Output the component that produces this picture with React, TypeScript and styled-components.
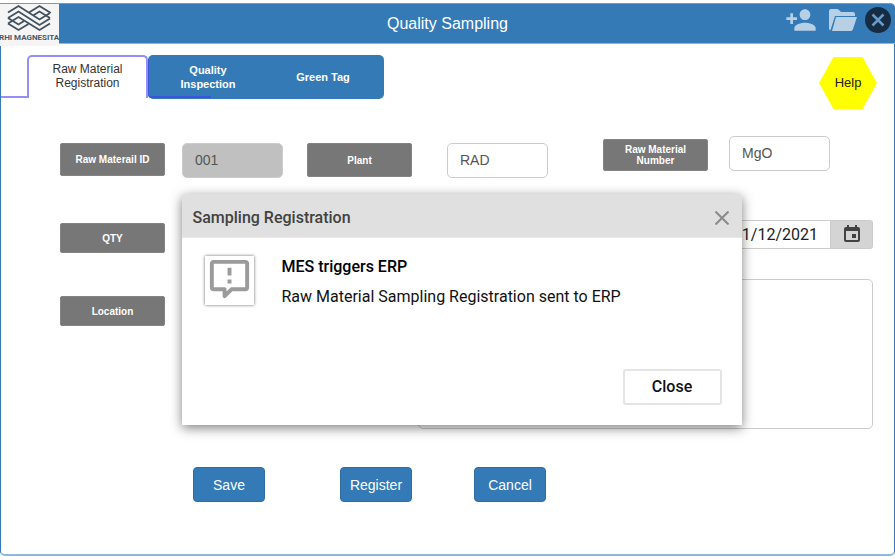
import React from "react";
import styled, { createGlobalStyle } from "styled-components";
import { MdPersonAdd } from "react-icons/md";

const blue = "#337ab7";
const sans = `"Liberation Sans", Arial, sans-serif`;
const roboto = `Roboto, "Liberation Sans", sans-serif`;

const GlobalStyle = createGlobalStyle`
  *, *::before, *::after { box-sizing: border-box; }
  body { margin: 0; background: #fff; font-family: ${sans}; }
  button, input, textarea { font-family: inherit; margin: 0; }
`;

const Page = styled.div`
  padding-top: 3px;
  min-height: 100vh;
`;

const Frame = styled.main`
  position: relative;
  border: 1px solid ${blue};
  border-top: 0;
  border-bottom: 2px solid #8fb7d9;
  border-radius: 0 5px 5px 5px;
  padding-bottom: 52px;
`;

const Header = styled.header`
  display: grid;
  grid-template-columns: 1fr auto 1fr;
  align-items: center;
  height: 41px;
  margin: 0 -1px;
  background: ${blue};
  border-top: 1px solid #6d9fcb;
  border-bottom: 1px solid #8fb7d9;
  border-radius: 0 5px 0 0;
`;

const Logo = styled.div`
  align-self: start;
  width: 59px;
  height: 42px;
  background: #f5f5f5;
  overflow: hidden;
  z-index: 1;

  svg { display: block; }
`;

const LogoText = styled.div`
  margin-left: -1px;
  color: #4a5864;
  font: bold 8px/9px Roboto, sans-serif;
  white-space: nowrap;
`;

const Title = styled.h1`
  margin: 0;
  padding-bottom: 2px;
  color: #fff;
  font: 400 16px/20px ${sans};
`;

const HeaderActions = styled.div`
  display: flex;
  justify-content: flex-end;
  align-items: center;
  align-self: start;
  height: 31px;
  padding-right: 4px;
`;

const IconButton = styled.button`
  display: flex;
  padding: 0;
  border: 0;
  background: none;
  color: #b8d0e5;

  & + & { margin-left: 12px; }
  & + &:last-child { margin-left: 8px; }
  svg { display: block; }
`;

const TopRow = styled.div`
  display: flex;
  justify-content: space-between;
  padding: 11px 17px 0 0;
`;

const Tabs = styled.div`
  display: flex;
  align-items: flex-start;

  &::before {
    content: "";
    width: 26px;
    height: 43px;
    border-bottom: 2px solid #9290f8;
  }
`;

const Tab = styled.button<{ $active?: boolean }>`
  position: relative;
  width: ${(p) => (p.$active ? 121 : 120)}px;
  height: 44px;
  padding: 0;
  border: 0;
  background: ${(p) => (p.$active ? "#fff" : blue)};
  color: ${(p) => (p.$active ? "#333" : "#fff")};
  font: ${(p) => (p.$active ? "400 12px" : "700 11px")}/14px ${sans};

  &:first-child {
    height: 43px;
    padding-bottom: 3px;
    border: 2px solid #9290f8;
    border-bottom: 0;
    border-radius: 5px 5px 0 0;
  }
  &:nth-child(2) { border-radius: 5px 0 0 5px; }
  &:nth-child(2)::after {
    content: "";
    position: absolute;
    left: 0;
    top: 4px;
    bottom: 1px;
    width: 63px;
    border: solid #3a55dc;
    border-width: 0 0 2px 1px;
    border-radius: 0 0 0 4px;
  }
  &:last-child {
    width: 116px;
    padding-right: 6px;
    border-radius: 0 5px 5px 0;
  }
`;

const Help = styled.button`
  width: 58px;
  height: 52px;
  margin-top: 2px;
  padding: 0;
  border: 0;
  background: #ff0;
  clip-path: polygon(25% 0, 75% 0, 100% 50%, 75% 100%, 25% 100%, 0 50%);
  color: #222;
  font: 13px/16px ${sans};
`;

const Row = styled.div<{ $top: number }>`
  display: grid;
  grid-template-columns: 122fr 125fr 140fr 156fr 126fr 144fr;
  margin-top: ${(p) => p.$top}px;
  padding: 0 21px 0 59px;
`;

const Label = styled.label<{ $height?: number; $end?: boolean }>`
  display: flex;
  align-items: center;
  justify-content: center;
  align-self: ${(p) => (p.$end ? "end" : "start")};
  width: 105px;
  height: ${(p) => p.$height ?? 30}px;
  margin-top: ${(p) => (p.$end ? 0 : "var(--drop, 0)")};
  padding: 0 8px;
  background: #777;
  border: 1px solid #848484;
  border-radius: 2px;
  color: #fff;
  text-align: center;
  font: bold 10px/11px ${sans};
`;

const FieldRow = styled(Row)`
  --drop: 7px;
`;

const TextField = styled.input`
  width: 101px;
  height: 35px;
  margin-top: var(--drop, 0);
  padding: 0 12px 1px;
  border: 1px solid #ccc;
  border-radius: 5px;
  background: #fff;
  color: #555;
  font-size: 14px;

  &:read-only { background: #c0c0c0; }
`;

const RaisedField = styled(TextField)`
  margin-top: 0;
`;

const CompactField = styled(TextField)`
  height: 33px;
`;

const NumberLabel = styled(Label)`
  margin-top: 3px;
`;

const DateField = styled.div`
  grid-column: 5 / -1;
  justify-self: end;
  display: flex;
  height: 29px;
`;

const DateInput = styled.input`
  width: 110px;
  padding: 0 12px 0 0;
  border: 1px solid #ccc;
  border-right: 0;
  text-align: right;
  color: #212121;
  && { font: 16px/27px ${roboto}; }
`;

const DateButton = styled.button`
  display: flex;
  align-items: center;
  justify-content: center;
  width: 43px;
  padding: 0 0 2px;
  border: 1px solid #ccc;
  border-radius: 0 3px 3px 0;
  background: #d4d4d4;
`;

const Notes = styled.textarea`
  grid-column: 3 / -1;
  grid-row: 1;
  height: 150px;
  margin-left: 111px;
  border: 1px solid #ccc;
  border-radius: 5px;
  resize: none;
`;

const LocationRow = styled(Row)`
  --drop: 17px;
`;

const Actions = styled.div`
  display: grid;
  grid-template-columns: 147fr 134fr 399fr;
  margin-top: 38px;
  padding: 0 21px 0 192px;
`;

const ActionButton = styled.button`
  width: 72px;
  height: 35px;
  padding: 0;
  border: 1px solid #2e6da4;
  border-radius: 4px;
  background: ${blue};
  color: #fff;
  font-size: 14px;
`;

const Dialog = styled.section`
  position: absolute;
  top: 191px;
  left: calc(50% - 266px);
  width: 560px;
  background: #fff;
  border-radius: 3px 3px 0 0;
  box-shadow: 0 3px 12px rgba(0, 0, 0, 0.5);
  font-family: ${roboto};
`;

const DialogHeader = styled.div`
  display: flex;
  align-items: center;
  justify-content: space-between;
  height: 44px;
  padding: 4px 13px 0 11px;
  border-bottom: 1px solid #e8e8e8;
  border-radius: 3px 3px 0 0;
  background: #e0e0e0;

  button { display: flex; padding: 0; border: 0; background: none; }
`;

const DialogTitle = styled.h2`
  margin: 0;
  color: #424242;
  font: 500 16px/20px ${roboto};
`;

const DialogBody = styled.div`
  display: flex;
  gap: 28px;
  padding: 18px 22px 0 23px;
`;

const MessageIcon = styled.div`
  flex: none;
  width: 49px;
  height: 49px;
  background: #fff;
  box-shadow: 0 0 3px rgba(0, 0, 0, 0.6);
`;

const Message = styled.div`
  padding-top: 1px;
  color: #111;
  font-size: 16px;
  line-height: 20px;

  strong { display: block; margin-bottom: 10px; font-weight: 500; color: #000; }
`;

const DialogFooter = styled.div`
  display: flex;
  justify-content: flex-end;
  padding: 62px 20px 20px;
`;

const CloseButton = styled.button`
  width: 99px;
  height: 36px;
  border: 2px solid #e4e4e4;
  border-radius: 3px;
  background: #fff;
  color: #111;
  font: 500 16px/20px ${roboto};
`;

function LogoMark() {
  return (
    <svg width="59" height="29" viewBox="0 0 59 29" fill="none" stroke="#44525f" strokeWidth="1.900">
      <path d="M8 8.500l10.500-6.500 21 13.500L50 9" />
      <path d="M8 14l10.500-6.500 21 13.500L50 14.500" />
      <path d="M8 19.500L18.500 13l21 13L50 19.500" />
      <path d="M29 8.500L39.500 2 50 8.500v.5" />
      <path d="M33.500 11.300l6-3.800L50 14" />
      <path d="M8 14l10.500 6.500 5.500-3.500" />
      <path d="M8 19.500L18.500 26l10-6" />
    </svg>
  );
}

export default function App() {
  return (
    <Page>
      <GlobalStyle />
      <Frame>
        <Header>
          <Logo>
            <LogoMark />
            <LogoText>RHI MAGNESITA</LogoText>
          </Logo>
          <Title>Quality Sampling</Title>
          <HeaderActions>
            <IconButton aria-label="Add user">
              <MdPersonAdd size={32} />
            </IconButton>
            <IconButton aria-label="Open folder">
              <svg width="28" height="22" viewBox="0 0 28 22" fill="currentColor">
                <path d="M0 20V2Q0 0 2 0h6q1 0 2 1l2 2h12q2 0 2 2v2H6L1.500 21Q0 21 0 20z" />
                <path d="M7 8h21l-4 12q-.5 2-2 2H3z" />
              </svg>
            </IconButton>
            <IconButton aria-label="Close window">
              <svg width="26" height="26" viewBox="0 0 26 26">
                <circle cx="13" cy="13" r="13" fill="#152c42" />
                <path d="M7.500 7.500l11 11m0-11l-11 11" stroke="#6a9bc8" strokeWidth="2.500" />
              </svg>
            </IconButton>
          </HeaderActions>
        </Header>

        <TopRow>
          <Tabs role="tablist">
            <Tab role="tab" aria-selected="true" $active>Raw Material<br />Registration</Tab>
            <Tab role="tab" aria-selected="false">Quality<br />Inspection</Tab>
            <Tab role="tab" aria-selected="false">Green Tag</Tab>
          </Tabs>
          <Help>Help</Help>
        </TopRow>

        <FieldRow $top={27}>
          <Label htmlFor="material-id" $height={33}>Raw Materail ID</Label>
          <TextField id="material-id" value="001" readOnly />
          <Label htmlFor="plant" $height={34}>Plant</Label>
          <TextField id="plant" defaultValue="RAD" />
          <NumberLabel htmlFor="material-number" $height={32}>Raw Material<br />Number</NumberLabel>
          <RaisedField id="material-number" defaultValue="MgO" />
        </FieldRow>

        <Row $top={42}>
          <Label htmlFor="qty" $end>QTY</Label>
          <CompactField id="qty" />
          <DateField>
            <DateInput aria-label="Date" defaultValue="01/12/2021" />
            <DateButton aria-label="Choose date">
              <svg width="16" height="18" viewBox="0 0 16 18" fill="#424242">
                <path fillRule="evenodd" d="M3 0h2v2h6V0h2v2h1q2 0 2 2v11q0 2-2 2H2q-2 0-2-2V4q0-2 2-2h1zM2 6v9h12V6z" />
                <path d="M8 9h4v4H8z" />
              </svg>
            </DateButton>
          </DateField>
        </Row>

        <LocationRow $top={26}>
          <Label htmlFor="location">Location</Label>
          <TextField id="location" />
          <Notes aria-label="Notes" />
        </LocationRow>

        <Actions>
          <ActionButton>Save</ActionButton>
          <ActionButton>Register</ActionButton>
          <ActionButton>Cancel</ActionButton>
        </Actions>

        <Dialog role="dialog" aria-labelledby="dialog-title">
          <DialogHeader>
            <DialogTitle id="dialog-title">Sampling Registration</DialogTitle>
            <button aria-label="Dismiss">
              <svg width="14" height="14" viewBox="0 0 14 14" stroke="#8a8a8a" strokeWidth="2">
                <path d="M0.500 0.500l13 13m0-13l-13 13" />
              </svg>
            </button>
          </DialogHeader>
          <DialogBody>
            <MessageIcon>
              <svg width="49" height="49" viewBox="0 0 50 50" fill="none" stroke="#9b9b9b" strokeWidth="4">
                <path d="M9 6h32q2 0 2 2v24q0 2-2 2H27l-7 7v-7H9q-2 0-2-2V8q0-2 2-2z" strokeLinejoin="round" />
                <path d="M25 12v8m0 4v4" />
              </svg>
            </MessageIcon>
            <Message>
              <strong>MES triggers ERP</strong>
              Raw Material Sampling Registration sent to ERP
            </Message>
          </DialogBody>
          <DialogFooter>
            <CloseButton>Close</CloseButton>
          </DialogFooter>
        </Dialog>
      </Frame>
    </Page>
  );
}
